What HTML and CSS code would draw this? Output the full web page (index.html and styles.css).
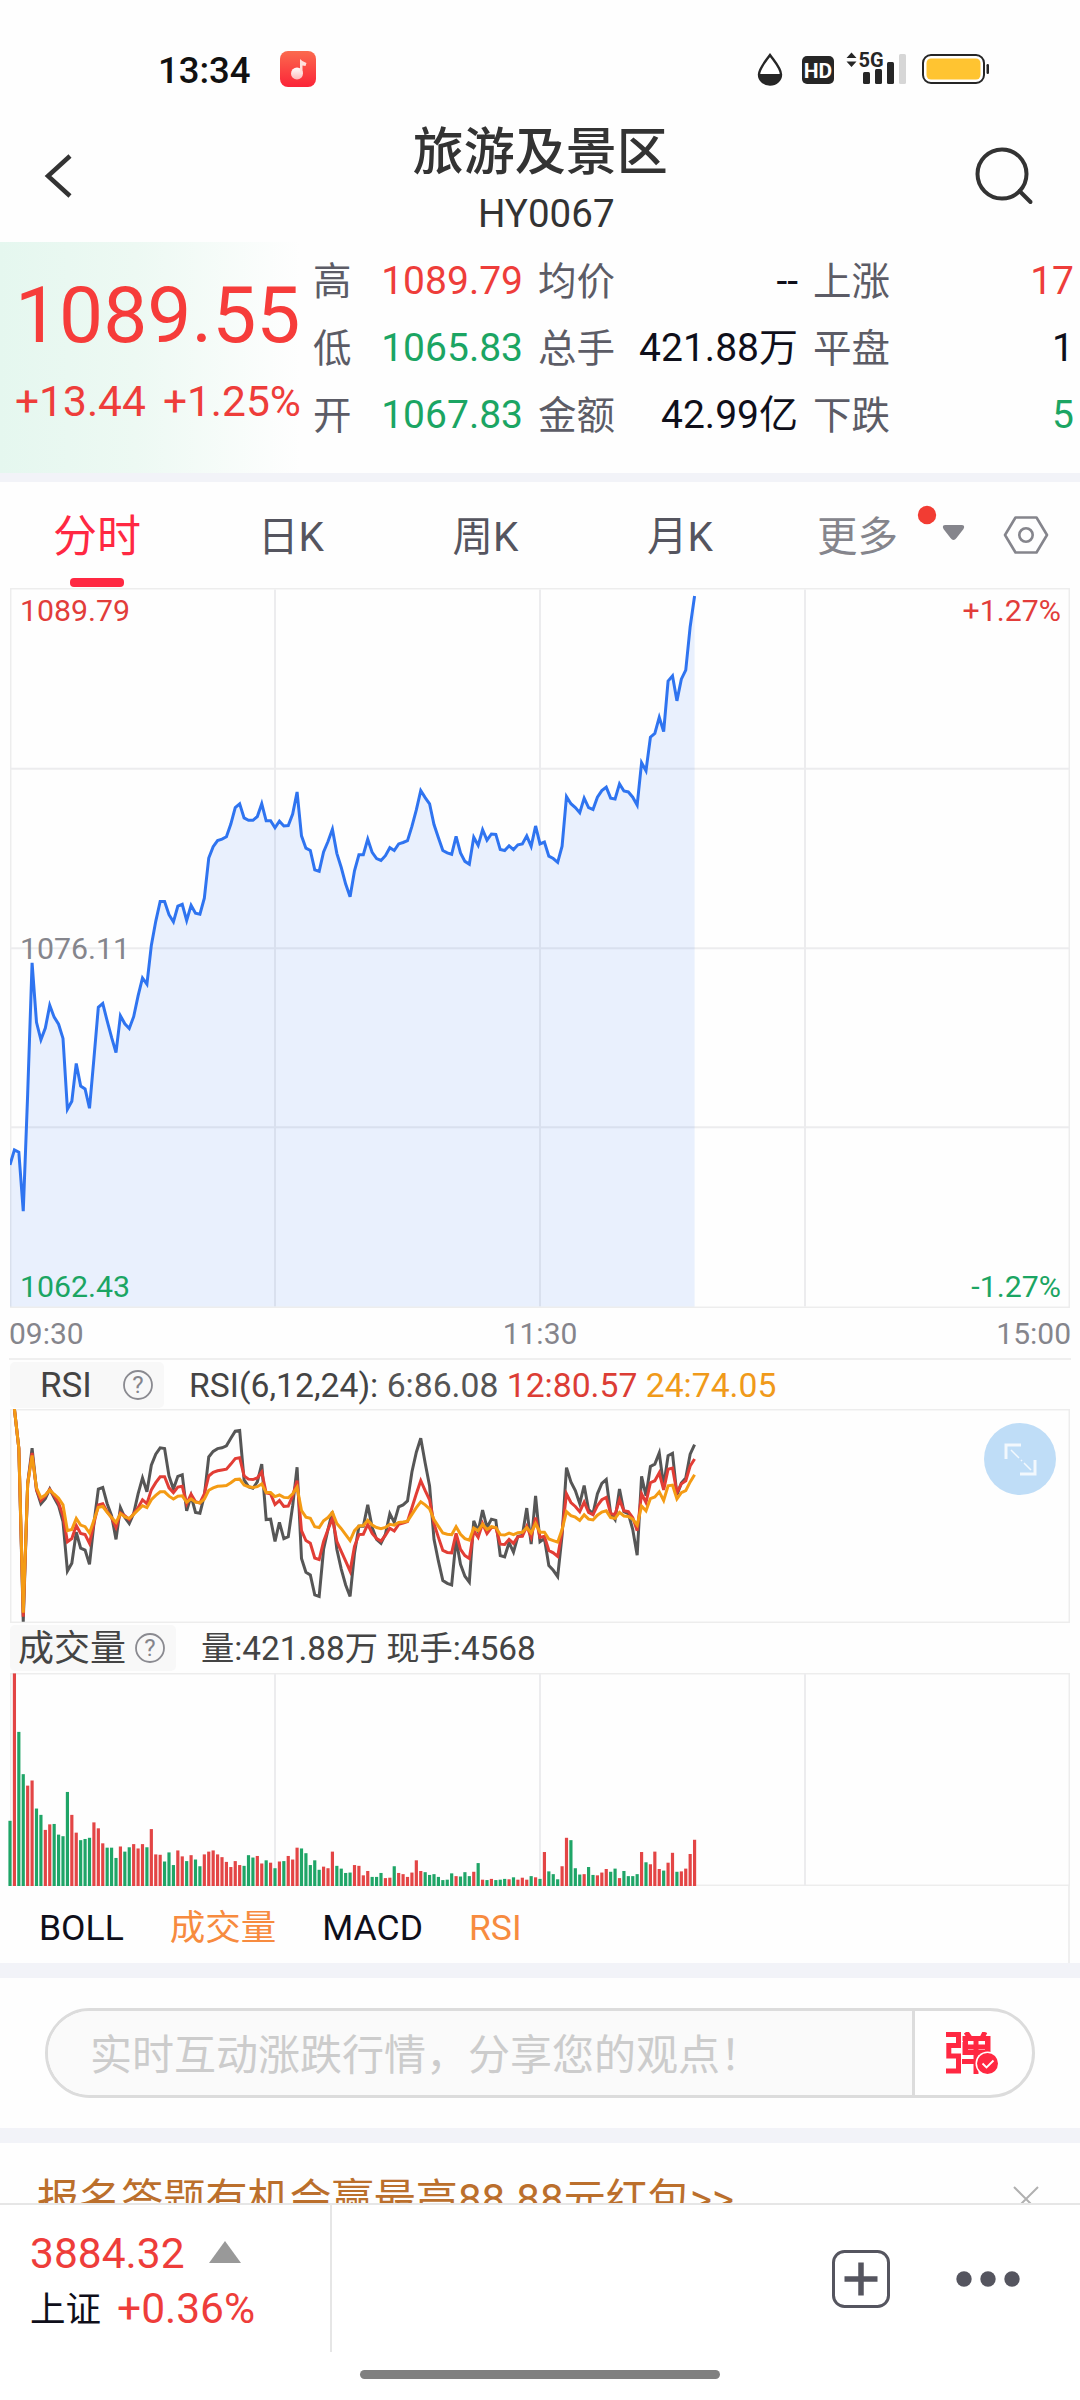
FILE: index.html
```html
<!DOCTYPE html>
<html lang="zh-CN">
<head>
<meta charset="utf-8">
<title>旅游及景区 HY0067</title>
<link rel="stylesheet" href="styles.css">
</head>
<body>
<div class="screen">
  <div class="status">
    <span class="clock">13:34</span>
    <svg class="app" width="36" height="36" viewBox="0 0 36 36">
      <defs>
        <linearGradient id="appbg" x1="0" y1="0" x2="0" y2="1"><stop offset="0" stop-color="#fb6a4e"/><stop offset="1" stop-color="#fb2438"/></linearGradient>
        <linearGradient id="note" x1="0" y1="0" x2="0" y2="1"><stop offset="0" stop-color="#fff"/><stop offset="1" stop-color="#ffb9b9"/></linearGradient>
      </defs>
      <rect width="36" height="36" rx="8" fill="url(#appbg)"/>
      <circle cx="17" cy="22.500" r="6" fill="url(#note)"/>
      <path d="M20 22.500V8q2 2.500 6.500 4l-1 3-3-.5v8z" fill="#ffe0dc"/>
    </svg>
    <svg class="sys" width="236" height="40" viewBox="756 48 236 40">
      <path d="M770 55c5 7 11 13.500 11 19.500a11 10 0 0 1-22 0C759 68.500 765 62 770 55z" fill="#fff" stroke="#262626" stroke-width="2.400"/>
      <path d="M759 74h22a11 10.500 0 0 1-22 0z" fill="#262626"/>
      <rect x="802" y="56" width="32" height="28" rx="5" fill="#262626"/>
      <text x="818" y="77.500" class="hd">HD</text>
      <path d="M846.500 58l5-5.500 5 5.500zM846.500 61.500h10l-5 5.500z" fill="#262626"/>
      <text x="871" y="67" class="five">5G</text>
      <rect x="863" y="72" width="7" height="12" rx="1.500" fill="#262626"/>
      <rect x="875" y="69" width="7" height="15" rx="1.500" fill="#262626"/>
      <rect x="887" y="62" width="7" height="22" rx="1.500" fill="#262626"/>
      <rect x="899" y="54" width="7" height="30" rx="1.500" fill="#d6d6d6"/>
      <rect x="923" y="55" width="61" height="28" rx="8" fill="#fff" stroke="#262626" stroke-width="2"/>
      <rect x="926.500" y="58.500" width="54" height="21" rx="4.500" fill="#ffc431"/>
      <rect x="986.500" y="64" width="2.500" height="10" rx="1.200" fill="#262626"/>
    </svg>
  </div>

  <header class="head">
    <svg width="44" height="50" viewBox="0 0 44 50"><path d="M34 5L12 25l22 20" fill="none" stroke="#333" stroke-width="4.500"/></svg>
    <div class="title"><h1>旅游及景区</h1><p>HY0067</p></div>
    <svg width="64" height="64" viewBox="0 0 64 64"><circle cx="31" cy="30" r="24.500" fill="none" stroke="#333" stroke-width="4"/><path d="M48.500 47l11 11" stroke="#333" stroke-width="4" stroke-linecap="round"/></svg>
  </header>

  <section class="quote">
    <div class="last"><strong>1089.55</strong><div><span>+13.44</span><span>+1.25%</span></div></div>
    <dl class="c1"><dt>高</dt><dd class="up">1089.79</dd><dt>低</dt><dd class="down">1065.83</dd><dt>开</dt><dd class="down">1067.83</dd></dl>
    <dl class="c2"><dt>均价</dt><dd>--</dd><dt>总手</dt><dd>421.88万</dd><dt>金额</dt><dd>42.99亿</dd></dl>
    <dl class="c3"><dt>上涨</dt><dd class="up">17</dd><dt>平盘</dt><dd>1</dd><dt>下跌</dt><dd class="down">5</dd></dl>
  </section>
  <div class="gap thin"></div>

  <nav class="tabs">
    <a class="on">分时</a><a>日K</a><a>周K</a><a>月K</a>
    <span class="more">更多
      <svg width="40" height="44" viewBox="0 0 40 44"><circle cx="9" cy="12" r="9.200" fill="#f23c33"/><path d="M27.500 22h16q4 0 2 4l-7 9q-3 4-6 0l-7-9q-2-4 2-4z" fill="#85858c"/></svg>
    </span>
    <svg class="gear" width="46" height="42" viewBox="0 0 46 42"><path d="M12.500 3.500h21L44 21 33.500 38.500h-21L2 21z" fill="none" stroke="#85858c" stroke-width="2.600" stroke-linejoin="round"/><circle cx="23" cy="21" r="6.700" fill="none" stroke="#85858c" stroke-width="2.600"/></svg>
  </nav>

  <section class="plot price">
    <svg id="price" viewBox="0 18 240 1525" preserveAspectRatio="none"></svg>
    <span class="lab tl up">1089.79</span><span class="lab tr up">+1.27%</span>
    <span class="lab ml">1076.11</span>
    <span class="lab bl down">1062.43</span><span class="lab br down">-1.27%</span>
  </section>
  <div class="axis"><span>09:30</span><span>11:30</span><span>15:00</span></div>

  <div class="phead rsi">
    <div class="pill">RSI<svg width="32" height="32" viewBox="0 0 32 32"><circle cx="16" cy="16" r="14" fill="none" stroke="#8a8a90" stroke-width="1.800"/><text x="16" y="23.500" class="q">?</text></svg></div>
    <p>RSI(6,12,24): <span class="k6">6:86.08</span> <span class="k12">12:80.57</span> <span class="k24">24:74.05</span></p>
  </div>
  <section class="plot osc">
    <svg id="rsi" viewBox="0 301 240 540" preserveAspectRatio="none"></svg>
    <button class="expand" aria-label="全屏"><svg width="72" height="72" viewBox="0 0 72 72"><path d="M22 36V22h15M51 37v14H36" fill="none" stroke="#f2f8fd" stroke-width="3"/><path d="M27 27l8 8m2 2l1 1m2 2l7 7" stroke="#f2f8fd" stroke-width="1.500"/></svg></button>
  </section>

  <div class="phead vol">
    <div class="pill">成交量<svg width="32" height="32" viewBox="0 0 32 32"><circle cx="16" cy="16" r="14" fill="none" stroke="#8a8a90" stroke-width="1.800"/><text x="16" y="23.500" class="q">?</text></svg></div>
    <p>量:421.88万 现手:4568</p>
  </div>
  <section class="plot bars">
    <svg id="volume" viewBox="0 969 240 539" preserveAspectRatio="none"></svg>
  </section>

  <nav class="inds"><a>BOLL</a><a class="on">成交量</a><a>MACD</a><a class="on">RSI</a></nav>
  <div class="gap"></div>

  <section class="talk">
    <div class="box">
      <span class="ph">实时互动涨跌行情，分享您的观点！</span>
      <span class="dan"><svg width="54" height="44" viewBox="0 0 54 44">
        <g fill="none" stroke="#ff2842" stroke-width="5">
          <path d="M0 2.500h12.500v11H2.800v10.500h9.700v15H0"/>
          <path d="M19 10v10.500h22.500V6M16.500 6.500H44M18 15h25M30 5v37M16 29.500h26"/>
          <path d="M20 0l4 6M39 0l-3 6"/>
        </g>
        <path d="M19.500 4v18M42 4v18" stroke="#ff2842" stroke-width="5"/>
        <circle cx="41.500" cy="31.500" r="12" fill="#fff"/><circle cx="41.500" cy="31.500" r="10.500" fill="#ff2842"/>
        <path d="M36.500 31.500l4 4 7-7" fill="none" stroke="#fff" stroke-width="1.800"/>
      </svg></span>
    </div>
  </section>
  <div class="gap"></div>

  <section class="promo"><span>报名答题有机会赢最高88.88元红包&gt;&gt;</span>
    <svg width="26" height="26" viewBox="0 0 26 26"><path d="M1 1l24 24M25 1L1 25" stroke="#b0b0b0" stroke-width="2"/></svg>
  </section>

  <footer class="dock">
    <div class="index">
      <div class="row up">3884.32<svg width="32" height="22" viewBox="0 0 32 22"><path d="M16 0l16 22H0z" fill="#999"/></svg></div>
      <div class="row"><span class="nm">上证</span><span class="up">+0.36%</span></div>
    </div>
    <div class="acts">
      <svg width="58" height="58" viewBox="0 0 58 58"><rect x="1.500" y="1.500" width="55" height="55" rx="11" fill="none" stroke="#55555f" stroke-width="3"/><path d="M29 12.500v33M12.500 29h33" stroke="#55555f" stroke-width="5.500"/></svg>
      <svg width="64" height="16" viewBox="0 0 64 16"><g fill="#55555f"><circle cx="8" cy="8" r="7.700"/><circle cx="32" cy="8" r="7.700"/><circle cx="56" cy="8" r="7.700"/></g></svg>
    </div>
    <div class="home"></div>
  </footer>
</div>
<script src="chart.js"></script>
</body>
</html>
```
FILE: styles.css
```css
* { box-sizing: border-box; margin: 0; padding: 0; }
body { background: #fff; font-family: Roboto, "Noto Sans CJK SC", sans-serif; color: #0f0f1a; }
svg { display: block; flex: none; }
.screen { width: 1080px; height: 2400px; overflow: hidden; display: flex; flex-direction: column; background: #fefefe; }
.screen > * { flex: none; }
.up { color: #ee3d3a; }
.down { color: #1ba563; }

.status { height: 104px; padding: 51px 88px 0 158px; display: flex; align-items: flex-start; }
.clock { font-size: 36.500px; font-weight: 500; line-height: 39px; color: #111; width: 122px; }
.sys { margin-left: auto; margin-top: -3px; }
.hd { font: 700 21px Roboto, sans-serif; fill: #fff; text-anchor: middle; }
.five { font: 700 20px Roboto, sans-serif; fill: #262626; text-anchor: middle; }

.head { height: 138px; padding: 0 44.500px 0 36px; display: flex; justify-content: space-between; align-items: flex-start; color: #333; }
.head > svg:first-child { margin-top: 47px; margin-right: 29px; }
.head > svg:last-child { margin-top: 44px; margin-top: 40px; }
.title { text-align: center; padding-top: 18px; }
.title h1 { font-size: 51px; font-weight: 500; line-height: 61px; }
.title p { font-size: 38.500px; line-height: 44px; margin-top: 9px; padding-left: 12px; }

.quote { height: 231px; display: flex; font-size: 39px; line-height: 67px; }
.last { width: 300px; background: linear-gradient(90deg, #e5f7ef 0, #edf9f3 45%, #fefefe 100%); padding: 26px 0 0 15px; color: #f63c3a; }
.last strong { display: block; font-size: 78.500px; font-weight: 400; line-height: 94px; white-space: nowrap; }
.last div { display: flex; gap: 17px; font-size: 42.500px; line-height: 50px; margin-top: 15px; color: #ee3d3a; white-space: nowrap; }
.quote dl { display: grid; grid-template-columns: auto 1fr; grid-auto-rows: 67px; padding-top: 6px; white-space: nowrap; }
.quote dt { font-size: 38.500px; color: #5c5c66; }
.quote dd { text-align: right; }
.c1 { margin-left: 13px; width: 210px; }
.c2 { margin-left: 15px; width: 260px; }
.c3 { margin-left: 15px; width: 261px; }

.gap { height: 15px; background: #f2f3f8; }
.gap.thin { height: 9px; }

.tabs { height: 106px; display: grid; grid-template-columns: 194px 194px 195px 194px 1fr auto; font-size: 40.500px; line-height: 110px; color: #55555f; text-align: center; align-items: start; }
.tabs .on { color: #ff2842; font-size: 44px; position: relative; }
.tabs .on::after { content: ""; position: absolute; left: 70px; top: 96px; width: 54px; height: 9px; border-radius: 4px; background: #ff2842; }
.more { display: flex; padding-left: 40px; gap: 20px; color: #85858c; }
.more svg { margin-top: 21px; overflow: visible; }
.gear { margin: 32px 31px 0 0; }

.plot { margin: 0 10px; position: relative; box-shadow: inset 0 0 0 1.500px #ededed; }
.plot > svg { width: 100%; height: 100%; }
.plot line, .plot polyline { vector-effect: non-scaling-stroke; fill: none; }
.grid { stroke: #ececee; stroke-width: 2; }
.area { fill: #2f74f5; fill-opacity: .1; }
.curve { stroke: #2f74f0; stroke-width: 3; }
.s6 { stroke: #565656; stroke-width: 3; }
.s12 { stroke: #e23d35; stroke-width: 3; }
.s24 { stroke: #f49b14; stroke-width: 3; }
.rise { fill: #e34545; }
.fall { fill: #1fa567; }
.price { height: 720px; }
.osc { height: 214px; }
.bars { height: 213px; }
.lab { position: absolute; font-size: 30.300px; line-height: 36px; color: #85858c; }
.lab.up { color: #e23d3a; }
.lab.down { color: #1ba563; }
.tl, .ml, .bl { left: 10px; }
.tr, .br { right: 9px; }
.tl, .tr { top: 5px; }
.ml { top: 343px; }
.bl, .br { bottom: 3px; }

.axis { height: 52px; margin: 0 9px; border-bottom: 2px solid #efefef; display: flex; justify-content: space-between; font-size: 30px; line-height: 52px; color: #85858c; }
.phead { height: 49px; display: flex; align-items: center; color: #444; }
.phead.vol { height: 50px; }
.pill { margin-left: 10px; height: 46px; border-radius: 5px; background: #f8f8f8; display: flex; align-items: center; justify-content: space-between; font-size: 35px; line-height: 46px; }
.rsi .pill { width: 154px; padding: 3px 10px 0 30px; }
.rsi .pill svg { margin-top: -2px; }
.vol .pill { width: 166px; padding: 2px 10px 0 8px; font-size: 36px; }
.vol .pill svg { margin-top: -2px; }
.q { font: 24px Roboto, sans-serif; fill: #85858c; text-anchor: middle; }
.phead p { font-size: 33.300px; line-height: 50px; padding-top: 2px; white-space: nowrap; }
.rsi p { margin-left: 25px; font-size: 33.700px; }
.vol p { margin-left: 25px; }
.k6 { color: #555; }
.k12 { color: #dc3d35; }
.k24 { color: #f09a1a; }
.expand { position: absolute; right: 14px; top: 14px; width: 72px; height: 72px; border: 0; border-radius: 50%; background: #bfddf7; }

.inds { height: 77px; width: 1070px; border-right: 2px solid #efefef; padding-left: 39px; display: flex; gap: 46px; font-size: 35.500px; line-height: 84px; }
.inds .on { color: #f78b3f; }

.talk { height: 150px; padding: 30px 45px; }
.box { height: 90px; border: 3px solid #dcdcdc; border-radius: 45px; display: flex; overflow: hidden; background: #fefefe; }
.ph { width: 867px; background: #fafafa; border-right: 3px solid #dcdcdc; padding-left: 42px; font-size: 42px; line-height: 89px; color: #ccc; white-space: nowrap; }
.dan { padding: 21px 0 0 31px; }

.promo { height: 60px; overflow: hidden; display: flex; justify-content: space-between; padding: 27px 41px 0 37px; font-size: 42.100px; color: #bb6f2c; white-space: nowrap; }
.promo svg { margin-top: 16px; }
.promo span { line-height: 59px; }

.dock { height: 197px; border-top: 2px solid #e6e6e6; background: #fff; position: relative; display: flex; align-items: flex-start; }
.index { width: 332px; height: 147px; border-right: 2px solid #e6e6e6; padding: 21px 0 0 30px; }
.row { height: 55px; line-height: 56px; font-size: 42.500px; display: flex; align-items: center; gap: 24px; }
.row svg { margin-top: -3px; }
.row + .row { gap: 16px; }
.nm { font-size: 35.500px; padding-top: 2px; }
.acts { margin-left: auto; padding: 45px 60px 0 0; display: flex; gap: 66px; align-items: center; }
.home { position: absolute; left: 360px; top: 165px; width: 360px; height: 9px; border-radius: 5px; background: #808080; }
```
FILE: chart.js
```js
// One sample per trading minute; y grows downwards, in plot units.
const price = [1240,1208,1213,1338,1090,812,938,975,950,902,927,942,972,1122,1105,1025,1073,1079,1120,1015,906,898,935,970,1002,924,941,951,926,882,844,857,775,724,682,682,710,725,692,688,722,690,707,709,675,590,566,553,550,545,518,483,475,505,510,510,502,475,511,511,526,512,522,521,497,450,543,569,574,615,618,577,555,529,580,610,645,672,617,583,583,550,578,591,595,585,568,574,560,557,553,523,488,447,462,475,519,547,574,579,582,544,579,597,603,546,563,530,552,539,540,572,574,564,572,562,560,543,565,522,560,556,586,591,599,565,460,475,483,494,463,483,487,461,447,440,463,465,433,448,450,461,478,388,405,334,326,292,322,215,204,257,211,192,100,35];
const rsi6 = [301,400,838,490,400,505,540,527,503,525,545,585,710,690,612,652,657,693,590,503,499,540,570,630,550,575,590,565,515,475,510,443,415,399,401,470,503,471,467,558,520,562,564,520,422,408,401,399,394,375,357,355,480,497,501,485,440,580,579,635,587,628,623,545,448,678,713,720,770,774,655,605,560,655,705,745,774,665,597,597,543,600,630,640,617,565,587,548,543,533,460,410,375,437,495,630,685,734,741,745,630,693,723,738,583,610,556,600,579,582,671,674,638,662,622,620,551,642,520,636,628,696,708,724,620,449,485,507,540,494,555,565,515,489,479,565,580,503,560,565,605,670,471,520,446,440,412,495,419,413,518,488,475,415,391];
const rsi12 = [301,400,825,490,412,505,532,520,504,520,538,570,636,628,595,615,618,640,590,543,540,560,575,600,563,570,580,565,550,530,540,505,487,472,472,500,512,498,496,540,516,535,538,515,470,461,457,455,453,440,426,424,470,478,479,475,460,513,515,542,532,547,546,520,482,608,633,640,677,681,635,605,577,635,660,685,710,648,618,617,592,615,628,634,620,602,609,592,589,585,550,515,482,507,530,590,625,658,663,664,615,655,671,678,608,625,590,615,600,600,642,643,630,640,623,622,597,625,575,625,622,658,664,673,610,515,537,547,560,536,562,568,545,530,524,565,567,530,558,560,575,608,515,537,487,482,462,505,453,450,512,490,482,445,427];
const rsi24 = [301,400,815,490,418,500,525,518,505,516,526,543,608,605,577,594,598,614,582,549,547,562,575,587,565,573,577,567,556,545,550,530,519,510,510,521,528,521,520,536,528,536,538,528,506,500,496,495,494,487,479,478,493,497,499,497,490,512,512,522,518,524,525,515,498,557,574,577,598,600,583,575,562,590,603,618,633,608,596,595,582,594,600,603,600,592,594,587,586,584,567,550,535,543,553,580,597,614,617,618,598,617,628,632,601,608,592,605,598,600,618,619,614,618,613,612,600,614,590,612,612,629,633,637,605,560,570,574,582,568,579,581,569,561,558,575,577,562,571,572,579,594,546,558,527,523,510,532,495,493,528,512,507,485,467];
const volume = "g1343 r970 g1118 g1225 r1254 r1241 g1312 g1328 r1366 r1352 g1351 g1378 g1382 g1270 r1328 r1373 g1392 g1389 g1386 r1347 r1362 r1400 g1411 g1411 g1437 r1408 g1421 g1410 r1402 r1413 r1402 g1410 r1364 r1428 r1429 g1446 g1423 g1455 r1418 r1433 g1445 r1430 g1441 g1458 r1428 r1421 r1418 r1428 r1435 r1447 r1460 r1445 r1455 g1457 g1430 g1436 r1432 r1451 g1443 r1449 g1463 r1446 g1445 r1432 r1441 r1411 g1413 g1425 g1455 g1443 g1467 r1459 r1463 r1421 g1457 g1464 g1475 g1474 r1455 r1457 r1481 r1470 g1485 g1485 g1475 r1488 r1487 g1458 r1475 r1478 r1485 r1474 r1443 r1470 g1473 g1480 g1478 g1485 g1493 g1492 g1476 r1483 g1484 g1473 g1483 r1472 g1450 r1492 g1493 r1490 g1493 g1492 g1490 r1491 g1486 r1492 r1487 r1492 g1483 r1486 g1490 r1422 g1471 g1478 g1491 r1458 r1386 g1392 g1463 g1479 r1478 g1460 g1480 r1481 r1474 r1465 g1472 g1464 r1488 g1470 g1483 g1483 g1478 r1422 g1448 r1453 r1421 r1465 g1469 r1449 r1424 g1472 r1471 r1464 r1427 r1391".split(" ");

const points = (ys, start) => ys.map((y, i) => `${i + start},${y}`).join(" ");
const line = (ys, start, cls) => `<polyline class="${cls}" points="${points(ys, start)}"/>`;
const columns = (top, bottom) => [60, 120, 180].map(x => `<line class="grid" x1="${x}" x2="${x}" y1="${top}" y2="${bottom}"/>`).join("");

document.getElementById("price").innerHTML =
  columns(21, 1540) +
  [401, 781, 1160].map(y => `<line class="grid" x1="0" x2="240" y1="${y}" y2="${y}"/>`).join("") +
  `<polygon class="area" points="0,1540 ${points(price, 0)} 155,1540"/>` +
  line(price, 0, "curve");

document.getElementById("rsi").innerHTML =
  line(rsi6, 1, "s6") + line(rsi12, 1, "s12") + line(rsi24, 1, "s24");

document.getElementById("volume").innerHTML =
  columns(969, 1508) +
  volume.map((v, i) => {
    const top = +v.slice(1);
    return `<rect class="${v[0] === "r" ? "rise" : "fall"}" x="${i - 0.36}" y="${top}" width="0.72" height="${1508 - top}"/>`;
  }).join("");
document.getElementById("volume").style.overflow = "visible";
```
